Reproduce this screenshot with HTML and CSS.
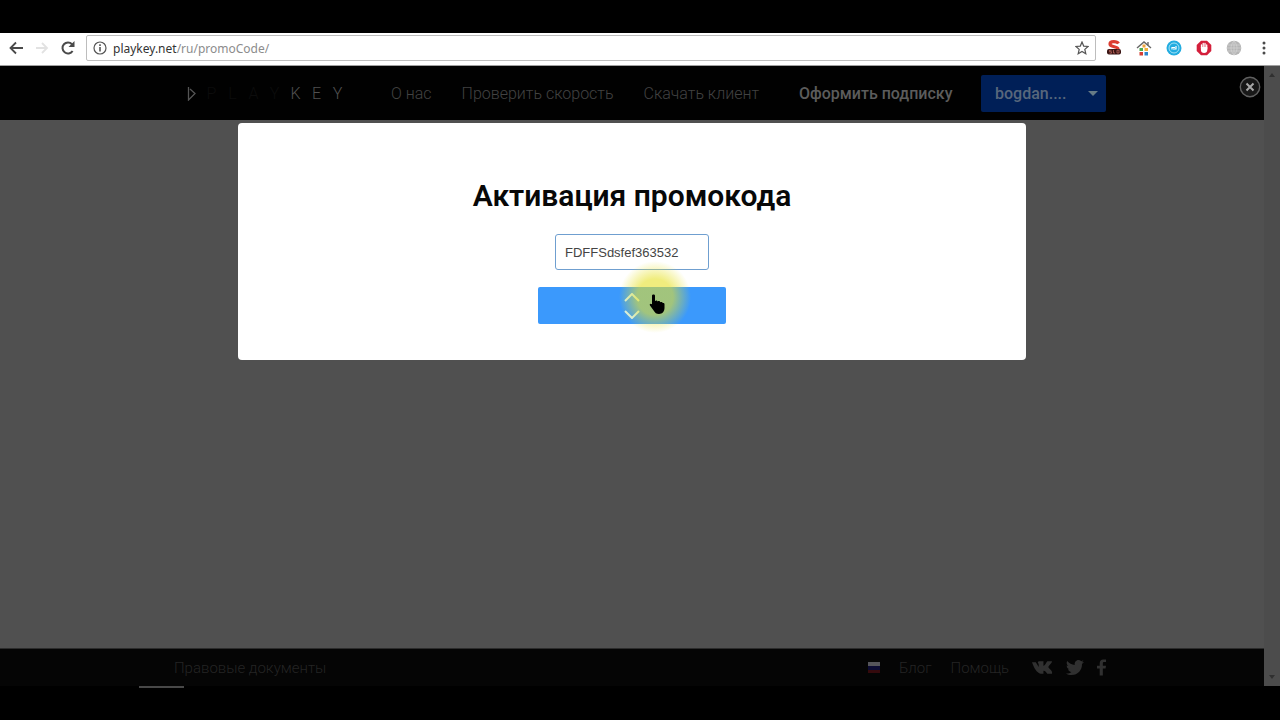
FILE: index.html
```html
<!DOCTYPE html>
<html lang="ru">

<head>
    <meta charset="utf-8">
    <title>Активация промокода</title>
    <meta name="viewport" content="width=device-width, initial-scale=1.0">
    <link rel="stylesheet" href="styles.css">
</head>

<body>
    <div class="toolbar">
        <button class="tool" aria-label="Назад">
            <svg width="16" height="16" viewBox="0 0 16 16" fill="none" stroke="#4a4a4a" stroke-width="1.8">
                <path d="M15 8H3M8 2.500L2.500 8 8 13.500" />
            </svg>
        </button>
        <button class="tool" aria-label="Вперёд">
            <svg width="16" height="16" viewBox="0 0 16 16" fill="none" stroke="#e2e2e2" stroke-width="1.8">
                <path d="M2 8h11M8 3l5 5-5 5" />
            </svg>
        </button>
        <button class="tool" aria-label="Обновить">
            <svg width="16" height="16" viewBox="0 0 16 16">
                <path d="M12.6 11A5.5 5.5 0 1 1 12 4.2" fill="none" stroke="#4a4a4a" stroke-width="2" />
                <path d="M14.5 1v6h-6z" fill="#4a4a4a" />
            </svg>
        </button>
        <div class="address">
            <svg width="14" height="14" viewBox="0 0 14 14" fill="none" stroke="#555">
                <circle cx="7" cy="7" r="6" stroke-width="1.2" />
                <path d="M7 6v4.5M7 3.3v1.6" stroke-width="1.6" />
            </svg>
            <span class="url"><b>playkey.net</b>/ru/promoCode/</span>
            <button class="tool star" aria-label="В закладки">
                <svg width="14" height="14" viewBox="0 0 14 14" fill="none" stroke="#555" stroke-width="1.2">
                    <path d="M7 1l1.7 4.1 4.4.4-3.3 2.9 1 4.3L7 10.4l-3.8 2.3 1-4.3L.9 5.5l4.4-.4z" />
                </svg>
            </button>
        </div>
        <div class="extensions">
            <svg width="16" height="16" viewBox="0 0 16 16">
                <path d="M12.5 3.500C11 1.200 4 .8 4 4c0 3.500 8 2 8 5" fill="none" stroke="#dc3c30" stroke-width="3.200" />
                <rect x="1" y="9" width="14" height="5.500" rx="2" fill="#3a1514" />
                <path d="M5.500 10.200h-2v1.500h2v1.500h-2M7.500 10v3h1.500M11 10.200h2v2.800h-2z" fill="none" stroke="#b9655c" stroke-width=".8" />
            </svg>
            <svg width="16" height="16" viewBox="0 0 16 16">
                <path d="M1 8l7-6 7 6M12 2v4" fill="none" stroke="#666" stroke-width="1.4" />
                <rect x="6.500" y="4.500" width="3" height="3" fill="#f0a43a" />
                <rect x="3.500" y="8" width="3.500" height="3" fill="#4cae50" />
                <rect x="8.500" y="8" width="3.500" height="3" fill="#efb13b" />
                <rect x="3.500" y="12" width="3.500" height="3.500" fill="#d63d31" />
                <rect x="8.500" y="12" width="3.500" height="3.500" fill="#2e85cc" />
            </svg>
            <svg width="16" height="16" viewBox="0 0 16 16">
                <circle cx="8" cy="8" r="7.5" fill="#22ace0" />
                <circle cx="8" cy="8" r="5" fill="none" stroke="#a4e2f6" />
                <path d="M6 9.500V7.500h3M10 6v3H7" fill="none" stroke="#fff" stroke-width="1.2" />
            </svg>
            <svg width="16" height="16" viewBox="0 0 16 16">
                <path d="M5 .7h6L15.3 5v6L11 15.300H5L.7 11V5z" fill="#d41f3b" />
                <path d="M5.500 8V5M7.200 8V3.500M9 8V3.500M10.700 9V5" stroke="#fff" stroke-width="1.3" stroke-linecap="round" />
                <path d="M4.900 7h6.400v3c0 2-1.300 3-3.200 3s-3.200-1.200-3.200-3z" fill="#fff" />
            </svg>
            <svg width="16" height="16" viewBox="0 0 16 16">
                <circle cx="8" cy="8" r="7.3" fill="#b5b5b5" />
                <path d="M1 8h14M2 5h12M2 11h12M8 1v14M8 1C4 5 4 11 8 15M8 1c4 4 4 10 0 14" fill="none" stroke="#d2d2d2" stroke-width=".8" />
            </svg>
            <button class="tool" aria-label="Меню">
                <svg width="16" height="16" viewBox="0 0 16 16" fill="#4a4a4a">
                    <circle cx="8" cy="3" r="1.5" />
                    <circle cx="8" cy="8" r="1.5" />
                    <circle cx="8" cy="13" r="1.5" />
                </svg>
            </button>
        </div>
    </div>

    <div class="window">
        <div class="page">
            <header class="header">
                <div class="container">
                    <a class="logo" href="#" aria-label="Playkey">
                        <svg width="9" height="15" viewBox="0 0 9 15" fill="none" stroke="#555" stroke-width="1.3">
                            <path d="M1.500 1v13l6.500-6.500L3 3" />
                        </svg>
                        <span class="dim">P</span><span class="dim">L</span><span class="dim">A</span><span class="dim">Y</span><span>K</span><span>E</span><span>Y</span>
                    </a>
                    <nav class="nav">
                        <a href="#">О нас</a>
                        <a href="#">Проверить скорость</a>
                        <a href="#">Скачать клиент</a>
                    </nav>
                    <a class="subscribe" href="#">Оформить подписку</a>
                    <button class="user">
                        bogdan....
                        <svg width="10" height="5" viewBox="0 0 10 5" fill="#667b86">
                            <path d="M0 0h10L5 5z" />
                        </svg>
                    </button>
                </div>
                <button class="close" aria-label="Закрыть">
                    <svg width="22" height="22" viewBox="0 0 22 22">
                        <circle cx="11" cy="11" r="9.7" fill="#181818" stroke="#606060" stroke-width="1.4" />
                        <path d="M7.5 7.5l7 7M14.5 7.5l-7 7" stroke="#a8a8a8" stroke-width="2" />
                    </svg>
                </button>
            </header>

            <main class="main">
                <form class="modal">
                    <h1><label for="code">Активация промокода</label></h1>
                    <input id="code" class="code" type="text" value="FDFFSdsfef363532">
                    <button class="submit" type="button" aria-label="Активировать">
                        <svg width="16" height="26" viewBox="0 0 16 26" fill="none" stroke="#d9f0ee" stroke-width="2">
                            <path d="M1 8l7-7 7 7M1 18l7 7 7-7" />
                        </svg>
                        <span class="glow"></span>
                        <svg class="pointer" width="16" height="20" viewBox="0 0 16 20">
                            <path d="M3 1.500C3 0 6 0 6 1.500V7c1-1 2.500-.6 2.600.5C9.700 6.700 11 7 11.200 8.200c1-.7 2.400-.2 2.600.9.9-.3 1.700.2 1.700 1.200v3.500c0 3.600-2 6.200-5.500 6.200-2.600 0-4.100-1.300-5.200-3.300L1 11.500c-1-1.700.8-2.400 2-1.300z" />
                        </svg>
                    </button>
                </form>
            </main>

            <footer class="footer">
                <div class="container">
                    <a class="legal" href="#">Правовые документы</a>
                    <button class="flag" aria-label="Русский">
                        <svg width="12" height="11" viewBox="0 0 12 11">
                            <path d="M0 0h12v4H0z" fill="#55555a" />
                            <path d="M0 4h12v4H0z" fill="#0b0b32" />
                            <path d="M0 8h12v3H0z" fill="#350a0d" />
                        </svg>
                    </button>
                    <a href="#">Блог</a>
                    <a href="#">Помощь</a>
                    <div class="social">
                        <a href="#" aria-label="ВКонтакте">
                            <svg width="21" height="14" viewBox="0 0 22 14" fill="#303030">
                                <path d="M0 1h4l3 5V3L6 1l1-1h5v5c2-1 3-4 4-5h5c0 2-3 4-4 6 1 2 5 4 4 7h-5c-1-1-2-3-4-3v3H9C5 12 2 7 0 1z" />
                            </svg>
                        </a>
                        <a href="#" aria-label="Twitter">
                            <svg width="18" height="15" viewBox="0 0 18 15" fill="#303030">
                                <path d="M18 2l-2 2c.2 6-4 11-10.500 11C3.500 15 1.500 14.500 0 13.400c2 .2 4-.4 5.400-1.500-1.700 0-3-1.100-3.500-2.600h1.600C1.700 8.900.7 7.400.7 5.600l1.600.5C.7 5 .2 2.800 1.200 1.100 3.100 3.400 5.800 4.700 8.800 4.900 8.200 2.400 10 0 12.500 0c1 0 2 .4 2.700 1.200L17.500.3 16 2.300z" />
                            </svg>
                        </a>
                        <a href="#" aria-label="Facebook">
                            <svg width="9" height="17" viewBox="0 0 10 18" fill="#303030">
                                <path d="M3 18v-8H0V7h3V4.500C3 1.500 4.500 0 7 0h3v3H8C7 3 6.500 3.500 6.500 4.500V7H10l-.5 3h-3v8z" />
                            </svg>
                        </a>
                    </div>
                </div>
            </footer>
        </div>
        <div class="scrollbar">
            <svg width="6" height="4" viewBox="0 0 6 4" fill="#303030">
                <path d="M3 0l3 4H0z" />
            </svg>
            <svg width="6" height="4" viewBox="0 0 6 4" fill="#303030">
                <path d="M0 0h6L3 4z" />
            </svg>
        </div>
    </div>
    <div class="bottom-line"></div>
</body>

</html>
```
FILE: styles.css
```css
* {
    box-sizing: border-box;
    margin: 0;
    padding: 0;
}

body {
    display: flex;
    flex-direction: column;
    min-height: 100vh;
    padding: 33px 0 32px;
    background-color: #000;
    font-family: Roboto, sans-serif;
    font-size: 16px;
}

a {
    color: inherit;
    text-decoration: none;
}

button {
    border: 0;
    background: none;
    font: inherit;
    cursor: pointer;
}

svg {
    display: block;
    flex-shrink: 0;
}

.toolbar {
    display: flex;
    align-items: center;
    gap: 10px;
    height: 33px;
    padding: 0 8px 2px;
    background-color: #fff;
    border-bottom: 1px solid #a0a0a0;
}

.address {
    display: flex;
    flex: 1;
    align-items: center;
    gap: 6px;
    height: 26px;
    padding: 0 6px;
    border: 1px solid #bdbdbd;
    border-radius: 2px;
}

.url {
    color: #8c8c8c;
    font-family: "Noto Sans", sans-serif;
    font-size: 12px;
}

.url b {
    color: #333;
    font-weight: 400;
}

.star {
    margin-left: auto;
}

.extensions {
    display: flex;
    align-items: center;
    gap: 14px;
}

.window {
    display: flex;
    flex: 1;
}

.page {
    display: flex;
    flex: 1;
    flex-direction: column;
    background-color: #505050;
}

.container {
    display: flex;
    align-items: center;
    width: 100%;
    max-width: 948px;
    margin: 0 auto;
}

.header {
    position: relative;
    display: flex;
    height: 54px;
    background-color: #010101;
    color: #424242;
}

.header .container {
    padding-left: 29px;
}

.logo {
    display: flex;
    align-items: center;
    color: #505050;
    font-weight: 300;
}

.logo span {
    width: 21px;
    text-align: center;
}

.logo svg {
    margin-right: 5px;
}

.logo .dim {
    color: #0c0c0c;
}

.nav {
    display: flex;
    gap: 30px;
    margin-left: 43px;
    font-weight: 300;
}

.subscribe {
    margin-left: 40px;
    color: #5c5c5c;
    font-weight: 500;
}

.user {
    display: flex;
    align-items: center;
    justify-content: space-between;
    width: 125px;
    height: 37px;
    margin-left: auto;
    padding: 0 8px 0 14px;
    border-radius: 2px;
    background-color: #001f57;
    color: #58677c;
    font-weight: 500;
}

.close {
    position: absolute;
    top: 10px;
    right: 3px;
}

.main {
    flex: 1;
    padding-top: 3px;
}

.modal {
    display: flex;
    flex-direction: column;
    align-items: center;
    width: 788px;
    max-width: 100%;
    margin: 0 auto;
    padding: 52px 20px 36px;
    border-radius: 4px;
    background-color: #fff;
}

.modal h1 {
    margin-bottom: 17px;
    color: #080808;
    font-size: 30px;
    font-weight: 600;
    line-height: 42px;
}

.code {
    width: 154px;
    height: 36px;
    margin-bottom: 17px;
    padding: 0 9px;
    border: 1px solid #6f9fd0;
    border-radius: 3px;
    color: #444;
    font-family: "Liberation Sans", sans-serif;
    font-size: 13px;
}

.submit {
    position: relative;
    display: flex;
    align-items: center;
    justify-content: center;
    width: 188px;
    height: 37px;
    border-radius: 2px;
    background-color: #3b99fc;
}

.glow {
    position: absolute;
    top: -26px;
    left: 81px;
    width: 72px;
    height: 72px;
    border-radius: 50%;
    background: radial-gradient(closest-side, rgba(230, 225, 40, 0.6) 50%, rgba(235, 235, 60, 0));
    pointer-events: none;
}

.pointer {
    position: absolute;
    top: 7px;
    left: 111px;
}

.footer {
    display: flex;
    height: 38px;
    border-top: 1px solid #2c2c2c;
    background-color: #050505;
    color: #242424;
    font-size: 15px;
    font-weight: 300;
}

.footer .container {
    gap: 19px;
    padding-left: 16px;
}

.legal {
    margin-right: auto;
}

.social {
    display: flex;
    align-items: center;
    gap: 13px;
    margin-left: 4px;
}

.scrollbar {
    display: flex;
    flex-direction: column;
    align-items: center;
    justify-content: space-between;
    width: 16px;
    padding: 7px 0;
    background-color: #4c4c4c;
}

.bottom-line {
    width: 45px;
    height: 2px;
    margin-left: 139px;
    background-color: #484848;
}
```
